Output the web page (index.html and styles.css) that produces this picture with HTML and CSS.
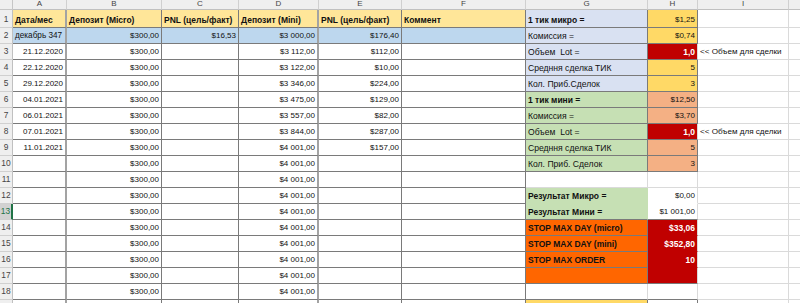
FILE: index.html
```html
<!DOCTYPE html>
<html lang="ru">
<head>
<meta charset="utf-8">
<title>Sheet</title>
<link rel="stylesheet" href="styles.css">
</head>
<body>
<div class="sheet">
  <!-- column headers -->
  <div class="cell corner"></div>
  <div class="cell hdr">A</div><div class="cell hdr">B</div><div class="cell hdr">C</div><div class="cell hdr">D</div><div class="cell hdr">E</div><div class="cell hdr">F</div><div class="cell hdr">G</div><div class="cell hdr">H</div><div class="cell hdr">I</div><div class="cell hdr"></div>

  <!-- 1 -->
  <div class="cell rowh">1</div>
  <div class="cell tb sep y b">Дата/мес</div><div class="cell tb y b">Депозит (Micro)</div><div class="cell tb y b">PNL (цель/факт)</div><div class="cell tb sep y b">Депозит (Mini)</div><div class="cell tb y b">PNL (цель/факт)</div><div class="cell tb y b">Коммент</div>
  <div class="cell lav bx b">1 тик микро =</div><div class="cell gold bx r num">$1,25</div><div class="cell"></div><div class="cell"></div>

  <!-- 2 -->
  <div class="cell rowh">2</div>
  <div class="cell tb sep bl sm">декабрь 347</div><div class="cell tb bl r num">$300,00</div><div class="cell tb bl r num">$16,53</div><div class="cell tb sep bl r num">$3 000,00</div><div class="cell tb bl r num">$176,40</div><div class="cell tb bl"></div>
  <div class="cell lav bx">Комиссия =</div><div class="cell gold bx r num">$0,74</div><div class="cell"></div><div class="cell"></div>

  <!-- 3 -->
  <div class="cell rowh">3</div>
  <div class="cell tb sep r num">21.12.2020</div><div class="cell tb r num">$300,00</div><div class="cell tb"></div><div class="cell tb sep r num">$3 112,00</div><div class="cell tb r num">$112,00</div><div class="cell tb"></div>
  <div class="cell lav bx">Объем&nbsp; Lot =</div><div class="cell red bx r num b wt">1,0</div><div class="cell ov note">&lt;&lt; Объем для сделки</div><div class="cell"></div>

  <!-- 4 -->
  <div class="cell rowh">4</div>
  <div class="cell tb sep r num">22.12.2020</div><div class="cell tb r num">$300,00</div><div class="cell tb"></div><div class="cell tb sep r num">$3 122,00</div><div class="cell tb r num">$10,00</div><div class="cell tb"></div>
  <div class="cell lav bx">Средння сделка ТИК</div><div class="cell gold bx r num">5</div><div class="cell"></div><div class="cell"></div>

  <!-- 5 -->
  <div class="cell rowh">5</div>
  <div class="cell tb sep r num">29.12.2020</div><div class="cell tb r num">$300,00</div><div class="cell tb"></div><div class="cell tb sep r num">$3 346,00</div><div class="cell tb r num">$224,00</div><div class="cell tb"></div>
  <div class="cell lav bx">Кол. Приб.Сделок</div><div class="cell gold bx r num">3</div><div class="cell"></div><div class="cell"></div>

  <!-- 6 -->
  <div class="cell rowh">6</div>
  <div class="cell tb sep r num">04.01.2021</div><div class="cell tb r num">$300,00</div><div class="cell tb"></div><div class="cell tb sep r num">$3 475,00</div><div class="cell tb r num">$129,00</div><div class="cell tb"></div>
  <div class="cell grn bx b">1 тик мини =</div><div class="cell sal bx r num">$12,50</div><div class="cell"></div><div class="cell"></div>

  <!-- 7 -->
  <div class="cell rowh">7</div>
  <div class="cell tb sep r num">06.01.2021</div><div class="cell tb r num">$300,00</div><div class="cell tb"></div><div class="cell tb sep r num">$3 557,00</div><div class="cell tb r num">$82,00</div><div class="cell tb"></div>
  <div class="cell grn bx">Комиссия =</div><div class="cell sal bx r num">$3,70</div><div class="cell"></div><div class="cell"></div>

  <!-- 8 -->
  <div class="cell rowh">8</div>
  <div class="cell tb sep r num">07.01.2021</div><div class="cell tb r num">$300,00</div><div class="cell tb"></div><div class="cell tb sep r num">$3 844,00</div><div class="cell tb r num">$287,00</div><div class="cell tb"></div>
  <div class="cell grn bx">Объем&nbsp; Lot =</div><div class="cell red bx r num b wt">1,0</div><div class="cell ov note">&lt;&lt; Объем для сделки</div><div class="cell"></div>

  <!-- 9 -->
  <div class="cell rowh">9</div>
  <div class="cell tb sep r num">11.01.2021</div><div class="cell tb r num">$300,00</div><div class="cell tb"></div><div class="cell tb sep r num">$4 001,00</div><div class="cell tb r num">$157,00</div><div class="cell tb"></div>
  <div class="cell grn bx">Средння сделка ТИК</div><div class="cell sal bx r num">5</div><div class="cell"></div><div class="cell"></div>

  <!-- 10 -->
  <div class="cell rowh">10</div>
  <div class="cell tb sep"></div><div class="cell tb r num">$300,00</div><div class="cell tb"></div><div class="cell tb sep r num">$4 001,00</div><div class="cell tb"></div><div class="cell tb"></div>
  <div class="cell grn bx">Кол. Приб. Сделок</div><div class="cell sal bx r num">3</div><div class="cell"></div><div class="cell"></div>

  <!-- 11 -->
  <div class="cell rowh">11</div>
  <div class="cell tb sep"></div><div class="cell tb r num">$300,00</div><div class="cell tb"></div><div class="cell tb sep r num">$4 001,00</div><div class="cell tb"></div><div class="cell tb"></div>
  <div class="cell"></div><div class="cell"></div><div class="cell"></div><div class="cell"></div>

  <!-- 12 -->
  <div class="cell rowh">12</div>
  <div class="cell tb sep"></div><div class="cell tb r num">$300,00</div><div class="cell tb"></div><div class="cell tb sep r num">$4 001,00</div><div class="cell tb"></div><div class="cell tb"></div>
  <div class="cell grn flat b">Результат Микро =</div><div class="cell wfill r num">$0,00</div><div class="cell"></div><div class="cell"></div>

  <!-- 13 -->
  <div class="cell rowh sel">13</div>
  <div class="cell tb sep"></div><div class="cell tb r num">$300,00</div><div class="cell tb"></div><div class="cell tb sep r num">$4 001,00</div><div class="cell tb"></div><div class="cell tb"></div>
  <div class="cell grn flat dk b">Результат Мини =</div><div class="cell wfill dk r num">$1 001,00</div><div class="cell"></div><div class="cell"></div>

  <!-- 14 -->
  <div class="cell rowh">14</div>
  <div class="cell tb sep"></div><div class="cell tb r num">$300,00</div><div class="cell tb"></div><div class="cell tb sep r num">$4 001,00</div><div class="cell tb"></div><div class="cell tb"></div>
  <div class="cell org bx b">STOP MAX DAY (micro)</div><div class="cell red redin r b wt">$33,06</div><div class="cell"></div><div class="cell"></div>

  <!-- 15 -->
  <div class="cell rowh">15</div>
  <div class="cell tb sep"></div><div class="cell tb r num">$300,00</div><div class="cell tb"></div><div class="cell tb sep r num">$4 001,00</div><div class="cell tb"></div><div class="cell tb"></div>
  <div class="cell org bx b">STOP MAX DAY (mini)</div><div class="cell red redin r b wt">$352,80</div><div class="cell"></div><div class="cell"></div>

  <!-- 16 -->
  <div class="cell rowh">16</div>
  <div class="cell tb sep"></div><div class="cell tb r num">$300,00</div><div class="cell tb"></div><div class="cell tb sep r num">$4 001,00</div><div class="cell tb"></div><div class="cell tb"></div>
  <div class="cell org bx b">STOP MAX ORDER</div><div class="cell red redin r b wt">10</div><div class="cell"></div><div class="cell"></div>

  <!-- 17 -->
  <div class="cell rowh">17</div>
  <div class="cell tb sep"></div><div class="cell tb r num">$300,00</div><div class="cell tb"></div><div class="cell tb sep r num">$4 001,00</div><div class="cell tb"></div><div class="cell tb"></div>
  <div class="cell org bx"></div><div class="cell red dk"></div><div class="cell"></div><div class="cell"></div>

  <!-- 18 -->
  <div class="cell rowh">18</div>
  <div class="cell tb sep"></div><div class="cell tb r num">$300,00</div><div class="cell tb"></div><div class="cell tb sep r num">$4 001,00</div><div class="cell tb"></div><div class="cell tb"></div>
  <div class="cell dk"></div><div class="cell dk"></div><div class="cell"></div><div class="cell"></div>

  <!-- 19 (only its top edge is in view) -->
  <div class="cell rowh"></div>
  <div class="cell tb sep"></div><div class="cell tb"></div><div class="cell tb"></div><div class="cell tb sep"></div><div class="cell tb"></div><div class="cell tb"></div>
  <div class="cell gold bx"></div><div class="cell bx"></div><div class="cell"></div><div class="cell"></div>
</div>
</body>
</html>
```
FILE: styles.css
```css
html, body {
  margin: 0;
  padding: 0;
  background: #ffffff;
}

body {
  width: 800px;
  height: 303px;
  overflow: hidden;
  font-family: "Liberation Sans", Arial, sans-serif;
  color: #111111;
}

.sheet {
  display: grid;
  grid-template-columns: 13px 54px 95px 77px 80px 83px 124px 122px 50px 91px 30px;
  grid-template-rows: 10px 18px repeat(18, 16px);
  width: 819px;
}

.cell {
  box-sizing: border-box;
  min-width: 0;
  display: flex;
  align-items: flex-end;
  padding: 0 2px 2px 2px;
  border-right: 1px solid #dadada;
  border-bottom: 1px solid #dadada;
  font-size: 8.6px;
  line-height: 10px;
  white-space: nowrap;
  overflow: hidden;
}

.r { justify-content: flex-end; }
.num { font-size: 8px; }
.sm { font-size: 8.2px; }
.b { font-weight: bold; font-size: 8.5px; }
.wt { color: #ffffff; }
.ov { overflow: visible; }
.note { font-size: 8.1px; }

.corner {
  background: #efefef;
  border-right-color: #c6c6c6;
  border-bottom-color: #c6c6c6;
}

.hdr {
  background: #efefef;
  color: #444444;
  font-size: 8px;
  padding: 0 0 1px 0;
  align-items: center;
  justify-content: center;
  border-right-color: #d0d0d0;
  border-bottom-color: #c0c0c0;
}

.rowh {
  background: #efefef;
  color: #444444;
  font-size: 8.4px;
  padding: 0 0 3px 0;
  justify-content: center;
  border-right-color: #c0c0c0;
  border-bottom-color: #d0d0d0;
}

.rowh.sel {
  background: #d2d2d2;
  color: #217346;
  border-right: 2px solid #217346;
}

.tb {
  border-right-color: #7a7a7a;
  border-bottom-color: #7a7a7a;
}

.sep { border-right: 2px solid #a3a3a3; }

.bx {
  border-right-color: #7a7a7a;
  border-bottom-color: #7a7a7a;
}

.dk { border-bottom-color: #7a7a7a; }

.y { background: #ffe699; }
.bl { background: #bdd7ee; }
.lav { background: #d9e1f2; }
.gold { background: #ffd966; }
.red { background: #c00000; border-right-color: #dadada; }
.grn { background: #c6e0b4; }
.sal { background: #f4b084; }
.org { background: #ff6600; }

.flat {
  border-right-color: #c6e0b4;
  border-bottom-color: #c6e0b4;
}
.flat.dk { border-bottom-color: #7a7a7a; }

.wfill { border-bottom-color: #ffffff; }
.wfill.dk { border-bottom-color: #7a7a7a; }

.redin { border-bottom-color: #c00000; }
```
